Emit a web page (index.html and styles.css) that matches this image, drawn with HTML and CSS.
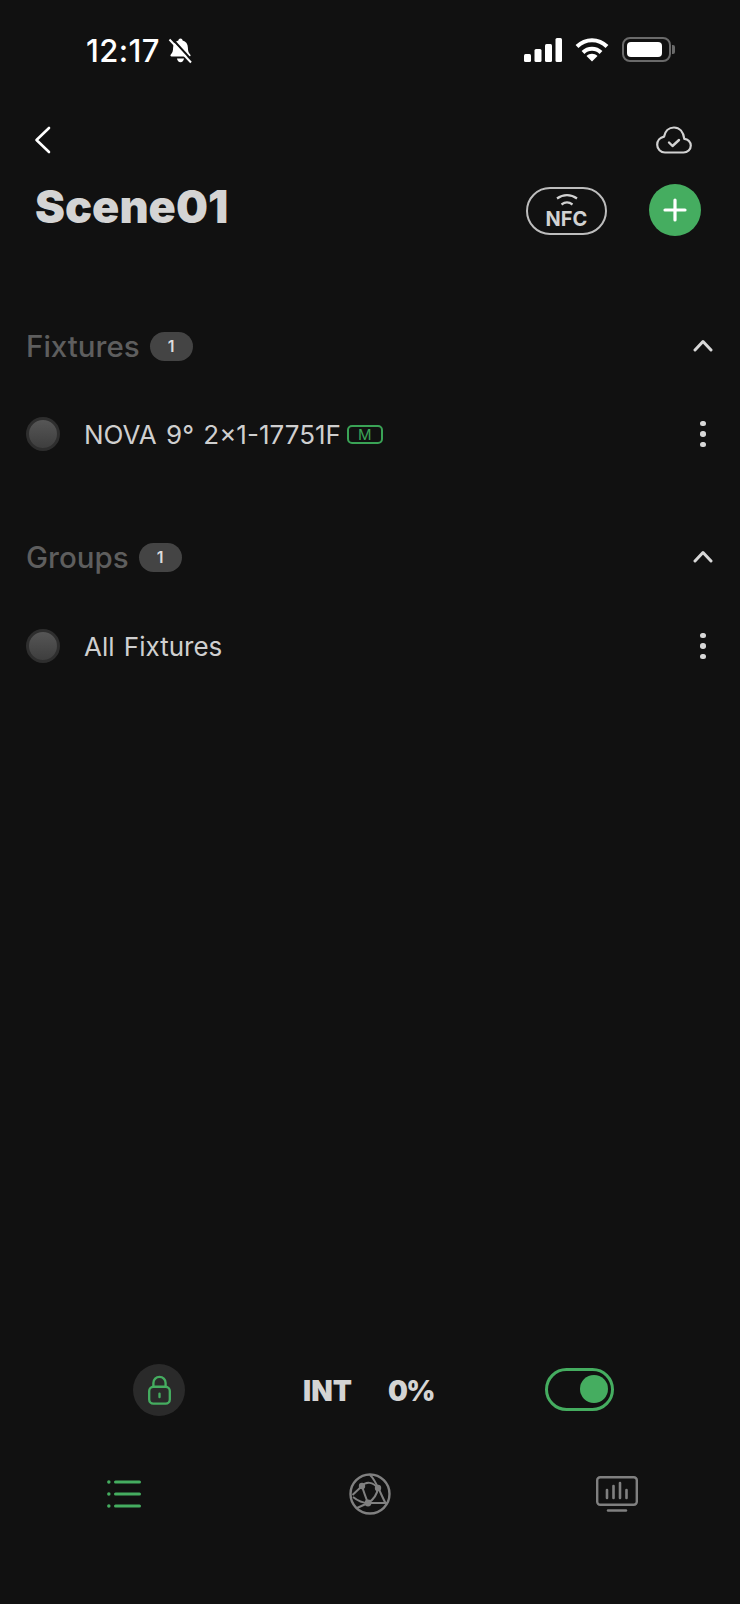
FILE: index.html
```html
<!DOCTYPE html>
<html lang="en">
<head>
    <meta charset="UTF-8">
    <meta name="viewport" content="width=device-width, initial-scale=1.0">
    <title>Scene01</title>
    <link rel="stylesheet" href="styles.css">
</head>
<body>
<div class="page">

    <div class="status-bar">
        <div class="status-left">
            <span class="clock">12:17</span>
            <svg class="bell" width="25" height="27" viewBox="0 0 25 27">
                <path d="M12.5 1.500c1.200 0 2 .8 2.100 1.900 3.400.9 5.300 3.600 5.300 7.300 0 3.500.8 5.300 2.300 6.800.8.800.4 2-.8 2H3.600c-1.200 0-1.600-1.200-.8-2 1.500-1.500 2.300-3.300 2.300-6.800 0-3.700 1.900-6.400 5.300-7.300.1-1.100.9-1.900 2.100-1.900z" fill="#fff"/>
                <path d="M9 21.500h7c-.3 2.300-1.700 3.700-3.500 3.700S9.300 23.800 9 21.500z" fill="#fff"/>
                <path d="M3.500 1l21 23" stroke="#111" stroke-width="2"/>
                <path d="M1.500 2.500l21.500 23" stroke="#fff" stroke-width="2"/>
            </svg>
        </div>
        <div class="status-right">
            <svg width="38" height="24" viewBox="0 0 38 24" fill="#fff">
                <rect x="0" y="16" width="7" height="8" rx="1.500"/>
                <rect x="10.500" y="11" width="7" height="13" rx="1.500"/>
                <rect x="21" y="6" width="7" height="18" rx="1.500"/>
                <rect x="31.500" y="0" width="6.500" height="24" rx="1.500"/>
            </svg>
            <svg class="wifi" width="34" height="25" viewBox="0 0 34 25" fill="none" stroke="#fff" stroke-width="4">
                <path d="M2 9.500C10.500 1 23.500 1 32 9.500"/>
                <path d="M8 15.500c5-5 13-5 18 0"/>
                <path d="M17 24.500l-5.500-5.500c3-3 8-3 11 0z" fill="#fff" stroke="none"/>
            </svg>
            <div class="battery">
                <div class="battery-fill"></div>
            </div>
            <div class="battery-nub"></div>
        </div>
    </div>

    <div class="nav-row">
        <svg width="17" height="28" viewBox="0 0 17 28" fill="none" stroke="#fff" stroke-width="2.600" stroke-linecap="round" stroke-linejoin="round">
            <path d="M15 2L2.500 14 15 26"/>
        </svg>
        <svg width="36" height="28" viewBox="0 0 36 28" fill="none" stroke="#d2d2d2" stroke-width="2.200" stroke-linecap="round" stroke-linejoin="round">
            <path d="M9 26.500h18.500c4 0 7.300-3 7.300-6.900 0-3.600-2.800-6.500-6.500-6.800C27.300 6 23.500 1.500 18 1.500c-5.300 0-9 4-10 9.200C4 11.500 1.200 14.800 1.200 18.800c0 4.300 3.500 7.700 7.800 7.700z"/>
            <path d="M13 16.500l3.500 3.500 6.500-6" stroke-width="2.400"/>
        </svg>
    </div>

    <div class="title-row">
        <h1 class="title">Scene01</h1>
        <div class="nfc-pill">
            <svg width="26" height="14" viewBox="0 0 26 14" fill="none" stroke="#d2d2d2" stroke-width="2.200">
                <path d="M3 5.500c6-4.500 14-4.500 20 0"/>
                <path d="M7.500 11.500c3.500-2.600 7.500-2.600 11 0"/>
            </svg>
            <span class="nfc-text">NFC</span>
        </div>
        <div class="add-btn">
            <svg width="24" height="24" viewBox="0 0 24 24" stroke="#fff" stroke-width="3.200" stroke-linecap="round">
                <path d="M12 2v20M2 12h20"/>
            </svg>
        </div>
    </div>

    <div class="section section-fixtures">
        <div class="section-head">
            <span class="section-name">Fixtures</span>
            <span class="count">1</span>
            <svg class="collapse" width="20" height="13" viewBox="0 0 20 13" fill="none" stroke="#d8d8d8" stroke-width="3" stroke-linecap="round" stroke-linejoin="round">
                <path d="M2 11l8-8.500 8 8.500"/>
            </svg>
        </div>
        <div class="item">
            <div class="item-dot"></div>
            <span class="item-name">NOVA 9° 2×1-17751F</span>
            <span class="mode-tag">M</span>
            <div class="more"><i></i><i></i><i></i></div>
        </div>
    </div>

    <div class="section section-groups">
        <div class="section-head">
            <span class="section-name">Groups</span>
            <span class="count">1</span>
            <svg class="collapse" width="20" height="13" viewBox="0 0 20 13" fill="none" stroke="#d8d8d8" stroke-width="3" stroke-linecap="round" stroke-linejoin="round">
                <path d="M2 11l8-8.500 8 8.500"/>
            </svg>
        </div>
        <div class="item">
            <div class="item-dot"></div>
            <span class="item-name">All Fixtures</span>
            <div class="more"><i></i><i></i><i></i></div>
        </div>
    </div>

    <div class="spacer"></div>

    <div class="control-row">
        <div class="lock-btn">
            <svg width="25" height="30" viewBox="0 0 26 32" fill="none" stroke="#45ad60" stroke-width="2.500" stroke-linecap="round">
                <rect x="2" y="12.500" width="22" height="18" rx="4.500"/>
                <path d="M6.500 12.500V8.500a6.500 6.500 0 0 1 13 0v4"/>
                <path d="M13 20v3.500"/>
            </svg>
        </div>
        <div class="int-label">
            <span>INT</span>
            <span class="int-value">0%</span>
        </div>
        <div class="toggle">
            <div class="toggle-knob"></div>
        </div>
    </div>

    <div class="tab-bar">
        <svg width="34" height="30" viewBox="0 0 34 30" fill="none" stroke="#45ad60" stroke-linecap="round">
            <path d="M8.500 3h24M8.500 15h24M8.500 27h24" stroke-width="3"/>
            <path d="M1.800 3h.1M1.800 15h.1M1.800 27h.1" stroke-width="3.400"/>
        </svg>
        <svg class="tab-globe" width="42" height="42" viewBox="0 0 42 42" fill="none" stroke="#808080" stroke-width="2">
            <circle cx="21" cy="21" r="19.500" stroke-width="2.400"/>
            <path d="M21 2C27 7 31 20 37 31"/>
            <path d="M13 13L3.500 22"/>
            <path d="M13 13C15 20 17 25 19 30"/>
            <path d="M13 13C17 8 24 9 29 15"/>
            <path d="M29 15C28 22 24 27 19 30"/>
            <path d="M19 30L8 35"/>
            <path d="M19 30C26 30 32 30 38 30"/>
            <path d="M4 24C9 28 14 30 19 30"/>
            <circle cx="13" cy="13" r="3.200" fill="#808080" stroke="none"/>
            <circle cx="29" cy="15" r="3.200" fill="#808080" stroke="none"/>
            <circle cx="19" cy="30" r="3.400" fill="#808080" stroke="none"/>
        </svg>
        <svg width="42" height="36" viewBox="0 0 42 36" fill="none" stroke="#808080" stroke-linecap="round">
            <rect x="1.200" y="1.200" width="39.600" height="27.600" rx="3" stroke-width="2.400"/>
            <path d="M11 14v8M17.500 10v12M24 7v15M30.500 14v8" stroke-width="2.600"/>
            <path d="M12 34.500h18" stroke-width="2.400"/>
        </svg>
    </div>

</div>
</body>
</html>
```

FILE: styles.css
```css
* {
    box-sizing: border-box;
}
body {
    margin: 0;
    background-color: #111111;
    font-family: Inter, "Liberation Sans", sans-serif;
}
.page {
    width: 740px;
    height: 1604px;
    display: flex;
    flex-direction: column;
    background-color: #111111;
    overflow: hidden;
}

/* status bar */
.status-bar {
    height: 76px;
    padding: 37px 65px 0 86px;
    display: flex;
    justify-content: space-between;
    align-items: flex-start;
}
.status-left {
    display: flex;
    align-items: center;
    gap: 8px;
}
.clock {
    font-size: 31px;
    line-height: 26px;
    font-weight: 500;
    letter-spacing: 0.4px;
    color: #ffffff;
}
.status-right {
    display: flex;
    align-items: center;
}
.wifi {
    margin-left: 13px;
    margin-right: 13px;
}
.battery {
    width: 49px;
    height: 25px;
    padding: 3px;
    border: 2px solid #6a6a6a;
    border-radius: 8px;
}
.battery-fill {
    width: 35px;
    height: 100%;
    background-color: #ffffff;
    border-radius: 4px;
}
.battery-nub {
    width: 3px;
    height: 9px;
    margin-left: 1px;
    background-color: #6a6a6a;
    border-radius: 0 2px 2px 0;
}

/* header */
.nav-row {
    height: 28px;
    margin-top: 50px;
    padding: 0 48px 0 34px;
    display: flex;
    justify-content: space-between;
    align-items: center;
}
.title-row {
    margin-top: 30px;
    padding: 0 39px 0 35px;
    height: 52px;
    display: flex;
    align-items: center;
}
.title {
    flex: 1;
    margin: 0 0 6px;
    font-size: 45px;
    line-height: 52px;
    font-weight: 900;
    color: #d4d4d4;
}
.nfc-pill {
    width: 81px;
    height: 48px;
    margin-top: 2px;
    margin-right: 42px;
    border: 2px solid #bdbdbd;
    border-radius: 24px;
    display: flex;
    flex-direction: column;
    align-items: center;
    padding-top: 4px;
}
.nfc-text {
    font-size: 20px;
    line-height: 18px;
    margin-top: 3px;
    font-weight: 700;
    color: #d2d2d2;
}
.add-btn {
    width: 52px;
    height: 52px;
    background-color: #45ad60;
    border-radius: 50%;
    display: flex;
    align-items: center;
    justify-content: center;
}

/* lists */
.section {
    padding: 0 27px 0 26px;
}
.section-fixtures {
    margin-top: 95px;
}
.section-groups {
    margin-top: 91px;
}
.section-groups .item {
    margin-top: 57px;
}
.section-head {
    height: 30px;
    display: flex;
    align-items: center;
}
.section-name {
    font-size: 29.500px;
    line-height: 30px;
    font-weight: 500;
    color: #5e5e5e;
}
.count {
    width: 43px;
    height: 29px;
    margin-left: 10px;
    background-color: #444444;
    border-radius: 15px;
    font-size: 16px;
    font-weight: 600;
    color: #dddddd;
    display: flex;
    align-items: center;
    justify-content: center;
}
.collapse {
    margin-left: auto;
    margin-bottom: 2px;
}
.item {
    height: 34px;
    margin-top: 56px;
    display: flex;
    align-items: center;
}
.item-dot {
    width: 34px;
    height: 34px;
    border-radius: 50%;
    background: linear-gradient(#565656, #3e3e3e);
    border: 3px solid #2e2e2e;
}
.item-name {
    margin-left: 24px;
    font-size: 26px;
    font-weight: 400;
    word-spacing: 2px;
    color: #cfcfcf;
}
.mode-tag {
    width: 36px;
    height: 19px;
    margin-left: 6px;
    border: 2px solid #3aa356;
    border-radius: 5px;
    font-size: 15px;
    line-height: 15px;
    text-align: center;
    color: #3aa356;
}
.more {
    margin-left: auto;
    margin-right: 7px;
    width: 6px;
    display: flex;
    flex-direction: column;
    gap: 5px;
}
.more i {
    display: block;
    width: 5.500px;
    height: 5.500px;
    border-radius: 50%;
    background-color: #d8d8d8;
}

.spacer {
    flex: 1;
}

/* bottom controls */
.control-row {
    height: 54px;
    display: flex;
    align-items: center;
    padding: 0 126px 0 133px;
}
.lock-btn {
    width: 52px;
    height: 52px;
    background-color: #2a2a2a;
    border-radius: 50%;
    display: flex;
    align-items: center;
    justify-content: center;
}
.int-label {
    display: flex;
    gap: 36px;
    margin-left: 118px;
    padding-top: 2px;
    font-size: 28px;
    font-weight: 900;
    color: #d4d4d4;
}
.int-value {
    letter-spacing: -1.500px;
}
.toggle {
    width: 69px;
    height: 43px;
    margin-left: auto;
    margin-bottom: 2px;
    border: 3px solid #45ad60;
    border-radius: 22px;
    display: flex;
    align-items: center;
    justify-content: flex-end;
    padding-right: 3px;
}
.toggle-knob {
    width: 28px;
    height: 28px;
    background-color: #45ad60;
    border-radius: 50%;
}
.tab-bar {
    height: 42px;
    margin-top: 56px;
    margin-bottom: 89px;
    padding: 0 102px 0 107px;
    display: flex;
    align-items: center;
    justify-content: space-between;
}
.tab-globe {
    margin-left: 3px;
}
```
